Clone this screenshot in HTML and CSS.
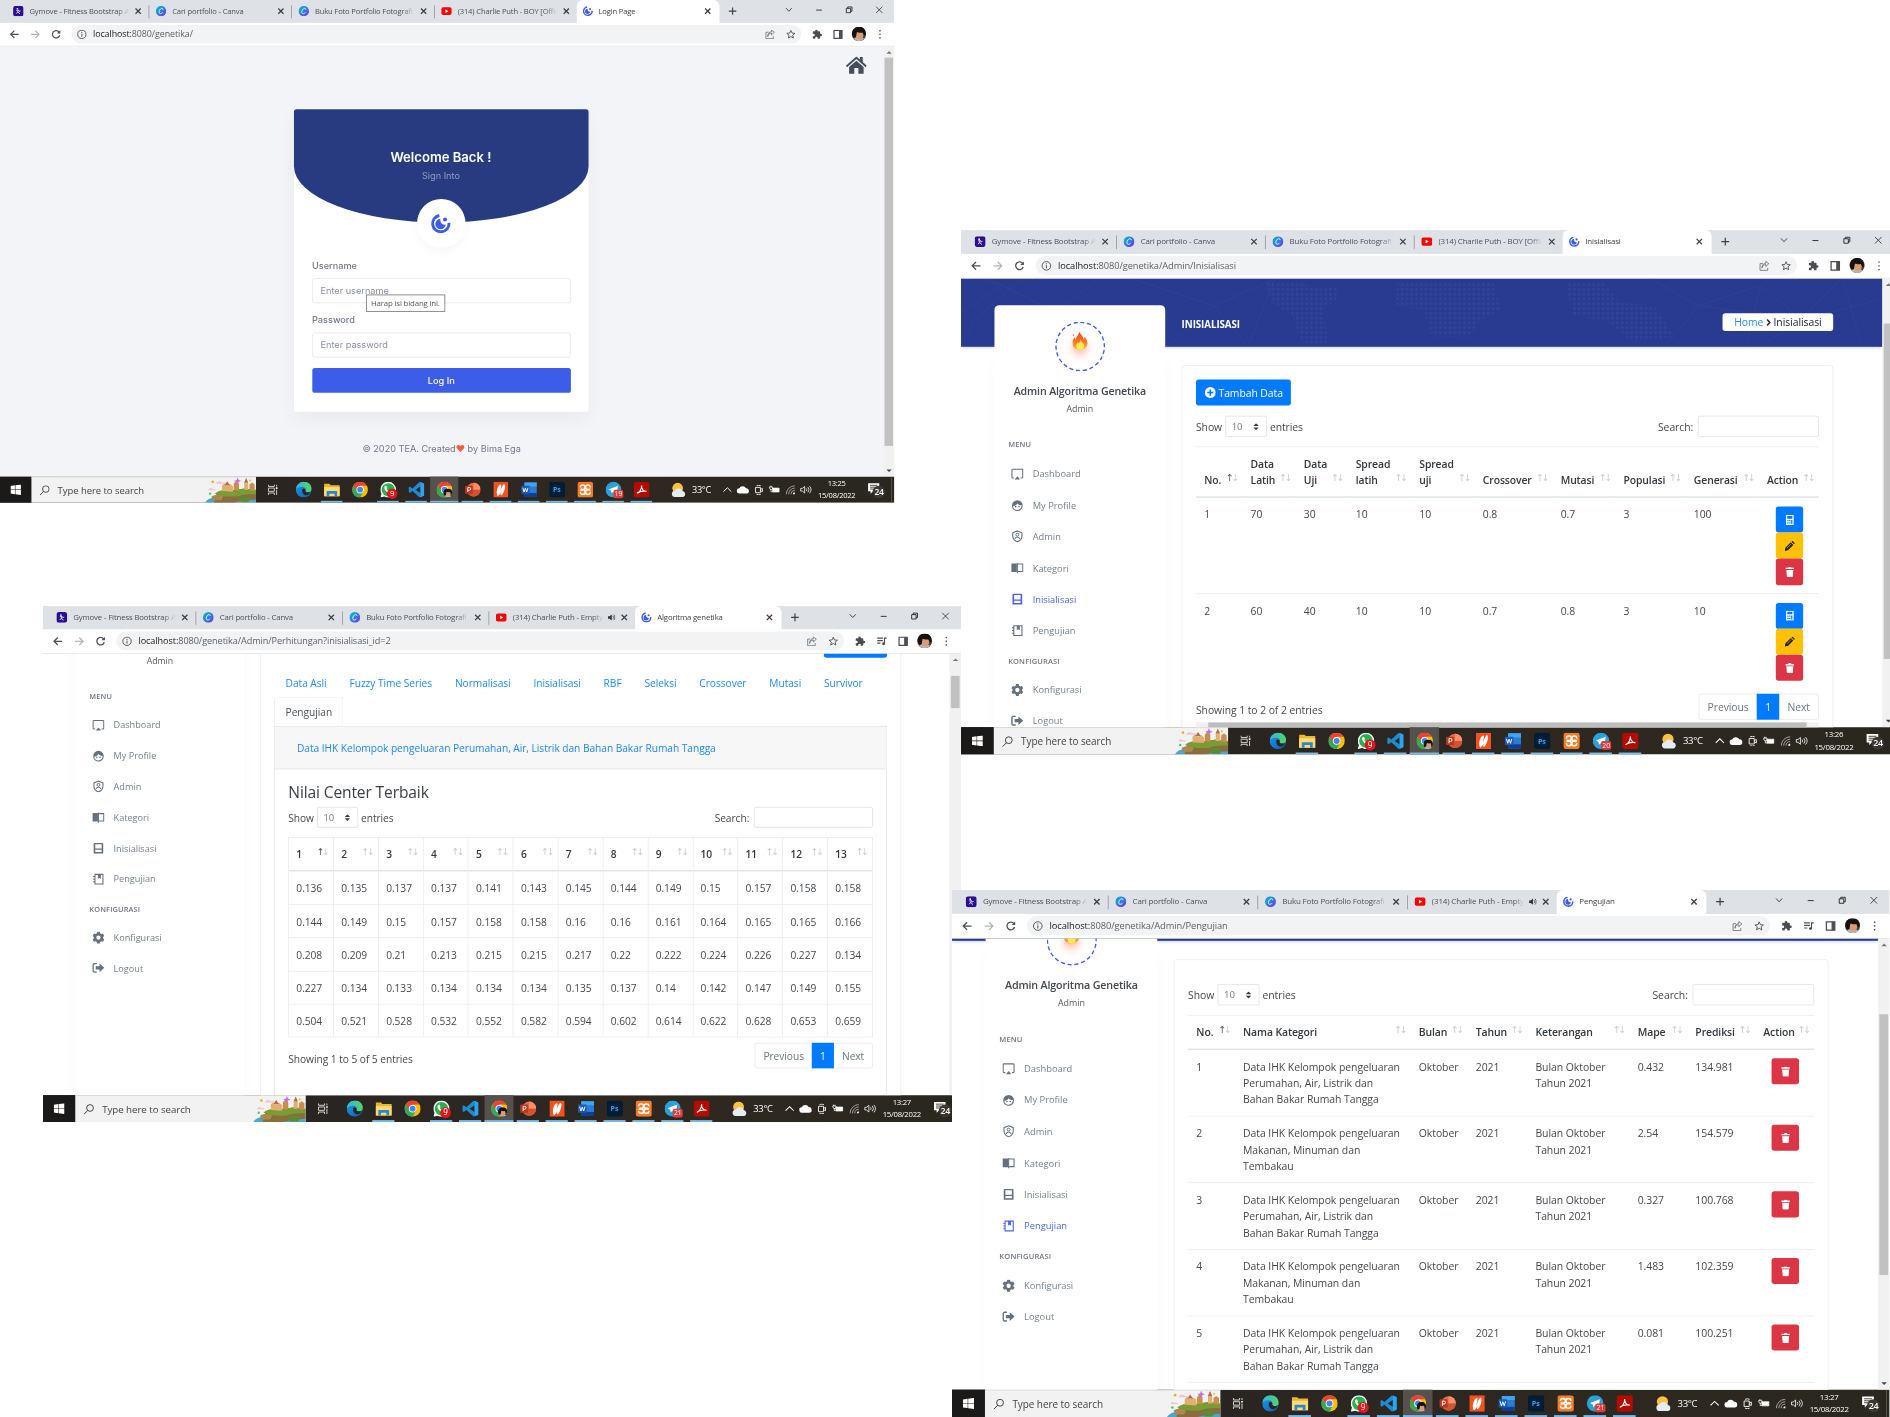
FILE: index.html
```html
<!DOCTYPE html>
<html lang="id">
<head>
<meta charset="utf-8">
<title>Algoritma Genetika</title>
<link rel="stylesheet" href="styles.css">
</head>
<body>
<svg class="defs" aria-hidden="true">
  <defs>
    <linearGradient id="g-canva" x1="0" y1="0" x2="1" y2="1"><stop offset="0" stop-color="#00c4cc"/><stop offset=".5" stop-color="#2f7fe6"/><stop offset="1" stop-color="#7d2ae8"/></linearGradient>
    <linearGradient id="g-edge" x1="0" y1="0" x2="1" y2="1"><stop offset="0" stop-color="#1b9de2"/><stop offset=".55" stop-color="#1479cf"/><stop offset="1" stop-color="#0c59a4"/></linearGradient>
    <linearGradient id="g-edge2" x1="0" y1="0" x2="1" y2="0"><stop offset="0" stop-color="#2fb4e8"/><stop offset="1" stop-color="#5bd35f"/></linearGradient>
    <linearGradient id="g-flame" x1="0" y1="0" x2="0" y2="1"><stop offset="0" stop-color="#f0401f"/><stop offset=".6" stop-color="#fb7a24"/><stop offset="1" stop-color="#fdbf3a"/></linearGradient>
  </defs>
  <symbol id="gymove" viewBox="0 0 16 16"><rect width="16" height="16" rx="4" fill="#2b0d96"/><circle cx="6.600" cy="4.400" r="1.300" fill="#fff"/><path d="M5 7l3.500-.5 1 2 2-1M8 7l-1.200 2.500 2.400 1 .8 2M6.800 9.500L5 11.800" fill="none" stroke="#fff" stroke-width="1.200"/></symbol>
  <symbol id="canva" viewBox="0 0 16 16"><circle cx="8" cy="8" r="8" fill="url(#g-canva)"/><path d="M10.800 5.800c.5-1.500-.6-2.300-1.900-2C6.600 4.400 5 7 5 9.300c0 3.400 3.600 3.200 5.600.6" fill="none" stroke="#fff" stroke-width="1.300"/></symbol>
  <symbol id="youtube" viewBox="0 0 16 16"><rect y="2" width="16" height="12" rx="3" fill="#f00"/><path d="M6.300 5.200v5.600L11 8z" fill="#fff"/></symbol>
  <symbol id="logo" viewBox="0 0 32 32"><path d="M13.500 3.200A13 13 0 1 0 28.800 15" fill="none" stroke="#3b5de7" stroke-width="4.600"/><path d="M15 8.500A8.200 8.200 0 1 0 23.500 17.500C18 18.500 14.500 15 15 8.500z" fill="#3b5de7"/><circle cx="22.500" cy="9.500" r="3.200" fill="#3b5de7"/></symbol>
  <symbol id="x" viewBox="0 0 16 16"><path d="M4 4l8 8M12 4l-8 8" fill="none" stroke="#3c4043" stroke-width="1.900"/></symbol>
  <symbol id="plus" viewBox="0 0 16 16"><path d="M8 1.500v13M1.500 8h13" fill="none" stroke="#3c4043" stroke-width="2"/></symbol>
  <symbol id="w-chev" viewBox="0 0 16 16"><path d="M3 5l5 5.500L13 5" fill="none" stroke="#333" stroke-width="1.500"/></symbol>
  <symbol id="w-min" viewBox="0 0 16 16"><path d="M3 8.500h10" stroke="#222" stroke-width="1.500"/></symbol>
  <symbol id="w-max" viewBox="0 0 16 16"><path d="M3 5.500h7.500V13H3zM5.500 5.500V3H13v7.500h-2.500" fill="none" stroke="#222" stroke-width="1.500"/></symbol>
  <symbol id="w-close" viewBox="0 0 16 16"><path d="M2.500 2.500l11 11M13.500 2.500l-11 11" fill="none" stroke="#222" stroke-width="1.300"/></symbol>
  <symbol id="back" viewBox="0 0 16 16"><path d="M15 8H2M8 2L2 8l6 6" fill="none" stroke="#4a4e52" stroke-width="2"/></symbol>
  <symbol id="fwd" viewBox="0 0 16 16"><path d="M1 8h13M8 2l6 6-6 6" fill="none" stroke="#b2b5b8" stroke-width="2"/></symbol>
  <symbol id="reload" viewBox="0 0 16 16"><path d="M13.500 9.500A6 6 0 1 1 12.500 4.200L13.500 5.500" fill="none" stroke="#4a4e52" stroke-width="2"/><path d="M14.500 1v5.500H9z" fill="#4a4e52"/></symbol>
  <symbol id="info" viewBox="0 0 16 16"><circle cx="8" cy="8" r="6.700" fill="none" stroke="#4a4e52" stroke-width="1.400"/><path d="M8 7v4.800M8 4v1.700" stroke="#4a4e52" stroke-width="1.500"/></symbol>
  <symbol id="share" viewBox="0 0 16 16"><path d="M6 4.500H1.500V15h12v-4M4.500 11.500C5 7.500 7.500 6 10.500 6V9l4.700-4.300L10.500 1v2.800C7 4 4.500 7 4.500 11.500z" fill="none" stroke="#5f6368" stroke-width="1.200"/></symbol>
  <symbol id="star" viewBox="0 0 16 16"><path d="M8 1.500l1.900 4.400 4.700.4-3.600 3.100 1.100 4.600L8 11.500 3.900 14 5 9.400 1.400 6.300l4.700-.4z" fill="none" stroke="#4a4e52" stroke-width="1.400"/></symbol>
  <symbol id="puzzle" viewBox="0 0 16 16"><path d="M14 7h-1V4.500A1.500 1.500 0 0 0 11.500 3H9V2.200a2 2 0 0 0-4 0V3H2.500A1.500 1.500 0 0 0 1 4.500V7h1.200a2 2 0 0 1 0 4H1v2.500A1.500 1.500 0 0 0 2.500 15H5v-1.200a2 2 0 0 1 4 0V15h2.500a1.500 1.500 0 0 0 1.500-1.500V11h1a2 2 0 0 0 0-4z" fill="#4a4e52"/></symbol>
  <symbol id="queue" viewBox="0 0 16 16"><path d="M1 3h9M1 7h9M1 11h5M12.500 12V3H16" fill="none" stroke="#4a4e52" stroke-width="1.800"/><circle cx="11" cy="12" r="2.300" fill="#4a4e52"/></symbol>
  <symbol id="panel" viewBox="0 0 16 16"><path d="M1.500 1.500h13v13h-13z" fill="none" stroke="#4a4e52" stroke-width="2"/><path d="M9.500 1.500h5v13h-5z" fill="#4a4e52"/></symbol>
  <symbol id="face" viewBox="0 0 24 24"><circle cx="12" cy="12" r="12" fill="#4d443f"/><path d="M3 20A12 12 0 0 0 21 20L16 17H8z" fill="#b9b5b0"/><ellipse cx="13" cy="13" rx="6.500" ry="8" fill="#d99c75"/><path d="M.5 13C0 4 6 0 12.500 0 19 0 24 5 23 13l-2.500 2L18 9.500C14 10.500 10.500 9 8.500 9L7 17 3 18z" fill="#17120f"/></symbol>
  <symbol id="dots" viewBox="0 0 16 16"><path d="M7 1h2.200v2.200H7zM7 6.900h2.200v2.200H7zM7 12.800h2.200V15H7z" fill="#4a4e52"/></symbol>
  <symbol id="audio" viewBox="0 0 16 16"><path d="M1 5.500h3L8.500 2v12L4 10.500H1z" fill="#333"/><path d="M10.500 5a4 4 0 0 1 0 6M12.500 2.500a7.500 7.500 0 0 1 0 11" fill="none" stroke="#333" stroke-width="1.500"/></symbol>

  <symbol id="win" viewBox="0 0 16 16"><path d="M0 2.200L6.800 1.200V7.600H0zM7.600 1.100L16 0v7.600H7.600zM0 8.400h6.800v6.400L0 13.800zM7.600 8.400H16V16l-8.400-1.100z" fill="#fff"/></symbol>
  <symbol id="search" viewBox="0 0 16 16"><circle cx="10" cy="6" r="5" fill="none" stroke="#333" stroke-width="1.300"/><path d="M6.500 9.800L1 15.300" stroke="#333" stroke-width="1.400"/></symbol>
  <symbol id="art" viewBox="0 0 78 39"><path d="M0 39Q6 29 22 32L48 30Q70 28 78 32V39z" fill="#4aa6cf"/><path d="M14 39L18 24Q26 18 40 20L62 17 78 20V34L56 36 44 39z" fill="#8b6d3c"/><path d="M15 25Q24 17 38 21L60 17 78 19V26Q60 25 50 29 30 31 15 25z" fill="#7a9d33"/><path d="M26 21V13l4-4 4 4 4-3 5 4v8zM60 19V8l3-6 3 6v11z" fill="#e1b070"/><path d="M44 20V10l4-5 4 5v10zM68 20v-9l4-3 4 3v10z" fill="#c98d4c"/><path d="M30 12l4-6 4 6zM60 8l3-7 3 7z" fill="#b4694a"/><path d="M10 29q10-5 18 0l-3 6H12z" fill="#a98a4e"/><path d="M52 31q10-4 18 1l-4 6H55z" fill="#5f8a34"/><path d="M18 8q4-4 8 0h6v2H17z" fill="#f3c4d4"/><path d="M6 18q3-3 6 0h4v2H5z" fill="#f3c4d4"/><path d="M50 0l1.500 4 4 1.500-4 1.500L50 11l-1.500-4-4-1.500 4-1.500z" fill="#c76be6"/><circle cx="12" cy="7" r="2" fill="#f2b01e"/><circle cx="8" cy="25" r="1.800" fill="#3ccf64"/><circle cx="69" cy="5" r="1.500" fill="#f2c01e"/></symbol>
  <symbol id="task" viewBox="0 0 16 16"><path d="M1 0v3h9V0M1 16v-3h9v3M1 5.500h9v5H1zM13.500 0v3M13.500 8v8" fill="none" stroke="#e8e6e3" stroke-width="1.300"/><path d="M12.300 4.300h2.500v2.500h-2.500z" fill="#fff"/></symbol>
  <symbol id="edge" viewBox="0 0 24 24"><circle cx="12" cy="12" r="12" fill="url(#g-edge)"/><path d="M0 11.500C1 4 6.500 0 12.500 0 19 0 24 5 24 10.500c0 4-3 5.500-6 5.500-2.500 0-4-1-3.500-2.500C16 11 14 7.500 9.500 7.500 5 7.500 1 9 0 11.500z" fill="url(#g-edge2)"/><path d="M9.500 12.500c0-1.200 1-2.500 2.500-2.500 2 0 3 1.500 2.500 3.500-.3 2 4 3.500 8 1.500-2 5-6 6-9 5-2.500-1-4-4-4-7.500z" fill="#2b2520"/></symbol>
  <symbol id="folder" viewBox="0 0 24 24"><path d="M0 3h8l2 2h14v17H0z" fill="#f0b429"/><path d="M0 8h24v14H0z" fill="#fddc73"/><path d="M4 14h16v8h-4v-4H8v4H4z" fill="#2a86d4"/></symbol>
  <symbol id="chrome" viewBox="0 0 24 24"><circle cx="12" cy="12" r="12" fill="#fbbc05"/><path d="M1.600 6A12 12 0 0 1 22.400 6H12L7 14.500z" fill="#ea4335"/><path d="M1.600 6A12 12 0 0 0 12 24l5-9-9-1z" fill="#34a853"/><circle cx="12" cy="12" r="5.600" fill="#fff"/><circle cx="12" cy="12" r="4.400" fill="#4285f4"/></symbol>
  <symbol id="whatsapp" viewBox="0 0 24 24"><path d="M12 0a12 12 0 0 1 0 24c-2 0-4-.5-5.700-1.500L0 24l1.600-6A12 12 0 0 1 12 0z" fill="#fff"/><circle cx="12" cy="12" r="10" fill="#25b24a"/><path d="M7 6.500l2-.5 1.500 3.500-1 1.500q1.500 2.500 4 3.500l1.500-1.500 3 1.500c0 3-3 3.500-5 2.500-4-1.500-7-5-7-8 0-1 .5-2 1-2.500z" fill="#fff"/></symbol>
  <symbol id="vscode" viewBox="0 0 24 24"><path d="M17 0l7 3v18l-7 3L6 14l-4 3-2-1.500V8.500L2 7l4 3zM18 7l-7 5 7 5z" fill="#1f8ad2" fill-rule="evenodd"/><path d="M18.500 .6L24 3v18l-5.500 2.400z" fill="#2fa3ee"/></symbol>
  <symbol id="ppt" viewBox="0 0 24 24"><circle cx="13.500" cy="12" r="10.500" fill="#ed6c47"/><path d="M13.500 1.500A10.500 10.500 0 0 1 24 12H13.500z" fill="#ff8f6b"/><path d="M3 12h21a10.500 10.500 0 0 1-21 0z" fill="#d35230"/><rect y="6" width="12" height="12" rx="1" fill="#b7371e"/><path d="M4.500 15.500v-7h2.300a2 2 0 0 1 0 4.300H4.500" fill="none" stroke="#fff" stroke-width="1.400"/></symbol>
  <symbol id="nitro" viewBox="0 0 24 24"><path d="M1 0h22v24H1z" fill="#f4511e"/><path d="M7 22c-2-5-1.500-10 .5-14 1-2 2.500-3.500 4-4 1.500 0 1.500 1.500 1 3.500l-2 9c1.500-5 3-9 5.500-12.500 1.500-1 2.500 0 2.500 2 0 5-1.500 9-4 13-1.500 2-3 2-3 0l.5-3c-1.500 3-2.500 5-5 6z" fill="#fff"/></symbol>
  <symbol id="word" viewBox="0 0 24 24"><rect x="5" y="1" width="19" height="22" rx="1.500" fill="#2b7cd3"/><path d="M5 1h19v6H5z" fill="#41a5ee"/><path d="M5 17h19v6H5z" fill="#103f91"/><rect y="6" width="13" height="12" rx="1" fill="#185abd"/><path d="M2.500 9l2 6.500 2-6 2 6 2-6.500" fill="none" stroke="#fff" stroke-width="1.400"/></symbol>
  <symbol id="ps" viewBox="0 0 24 24"><rect width="24" height="24" rx="4" fill="#001d34"/></symbol>
  <symbol id="xampp" viewBox="0 0 24 24"><rect width="24" height="24" rx="4" fill="#fb7a24"/><rect x="4.500" y="5" width="7" height="6.500" rx="2.800" fill="none" stroke="#fff" stroke-width="2.200"/><rect x="12.500" y="5" width="7" height="6.500" rx="2.800" fill="none" stroke="#fff" stroke-width="2.200"/><rect x="4.500" y="12.500" width="7" height="6.500" rx="2.800" fill="none" stroke="#fff" stroke-width="2.200"/><rect x="12.500" y="12.500" width="7" height="6.500" rx="2.800" fill="none" stroke="#fff" stroke-width="2.200"/><path d="M3 8.500h3v2H3zM3 13.500h3v2H3zM18 8.500h3v2h-3zM18 13.500h3v2h-3z" fill="#fb7a24"/></symbol>
  <symbol id="telegram" viewBox="0 0 24 24"><circle cx="12" cy="12" r="12" fill="#2ba1dc"/><path d="M4.500 11.500L19 6l-2.500 13-5-3.500-2.500 2-.5-4z" fill="#fff"/></symbol>
  <symbol id="acrobat" viewBox="0 0 24 24"><rect width="24" height="24" rx="4" fill="#b30b00"/><path d="M5 17.500Q12 14 12 5.500 12 14 19.500 14.500 11 13 5 17.500z" fill="none" stroke="#fff" stroke-width="1.600"/></symbol>
  <symbol id="weather" viewBox="0 0 26 24"><circle cx="11" cy="9" r="8.500" fill="#fdc23e"/><path d="M7 23a5 5 0 0 1-.5-10 7 7 0 0 1 12.500.5A5 5 0 0 1 20 23z" fill="#e4ecf5"/></symbol>
  <symbol id="t-up" viewBox="0 0 16 16"><path d="M2 11l6-6 6 6" fill="none" stroke="#fff" stroke-width="1.500"/></symbol>
  <symbol id="t-cloud" viewBox="0 0 16 16"><path d="M3.500 13a3.500 3.500 0 0 1-.5-7A5 5 0 0 1 12 5.800 3.600 3.600 0 0 1 12.500 13z" fill="#fff" transform="translate(-1.300 -1) scale(1.150)"/></symbol>
  <symbol id="t-meet" viewBox="0 0 16 16"><path d="M3 4.500h7.500v8H3zM10.500 7.500l3-1.500v5l-3-1.500M4.500 2a8 8 0 0 1 6.500 0M4.500 15a8 8 0 0 0 6.500 0" fill="none" stroke="#fff" stroke-width="1.300"/></symbol>
  <symbol id="t-bat" viewBox="0 0 16 16"><path d="M5 5.500h10v6H5z" fill="#fff" stroke="#fff"/><path d="M0 4h5v3q-2 2-4 0zM2.500 7v4H5M1.500 2v2M3.500 2v2" fill="none" stroke="#fff" stroke-width="1.100"/></symbol>
  <symbol id="t-wifi" viewBox="0 0 16 16"><path d="M2 15A13 13 0 0 1 15 2M5.500 15A9.500 9.500 0 0 1 15 5.500M9 15a6 6 0 0 1 6-6" fill="none" stroke="#bdbab5" stroke-width="1.200"/><path d="M12 15a3 3 0 0 1 3-3v3z" fill="#fff"/></symbol>
  <symbol id="t-vol" viewBox="0 0 16 16"><path d="M0 6h2.500L6 3v10L2.500 10H0zM8.500 6a3 3 0 0 1 0 4M11 4a6 6 0 0 1 0 8M13.500 2.500a8.500 8.500 0 0 1 0 11" fill="none" stroke="#fff" stroke-width="1.200"/></symbol>
  <symbol id="t-note" viewBox="0 0 20 20"><path d="M1 1h18v13H9l-4 4v-4H1z" fill="#fff"/><path d="M4 4.500h12M4 7.500h12M4 10.500h7" stroke="#2b2520" stroke-width="1.300"/></symbol>

  <symbol id="house" viewBox="0 0 36 30"><path d="M0 16L18 0l6 5.300V1h5v8.800L36 16l-2 2.500L18 4.500 2 18.500z" fill="#454d5c"/><path d="M18 7.500L30.500 18.300V30H21.500V20h-7v10H5.500V18.300z" fill="#454d5c"/></symbol>
  <symbol id="flame" viewBox="0 0 24 28"><path d="M11 0c1 5 6 7 6.500 12 1-1 1.300-2.500 1-4 3 3 4.500 6.500 4.500 10 0 6-5 10-11.500 10S0 24 0 18c0-4 2-7 4-9 0 2 .5 3 1.500 4C5.500 8 10 5 11 0z" fill="url(#g-flame)"/><path d="M12 12c1 4 6 5 6 10 0 4-3 6-6 6s-6-2-6-6c0-3 2-4 2.500-6 .7 1 1 2 1 3 2-2 2.500-4 2.500-7z" fill="#ffe84f"/><path d="M2 3l1 3-2 1z" fill="#fb5a24"/></symbol>
  <symbol id="m-dash" viewBox="0 0 24 24"><path d="M6 19H3.500A1.500 1.500 0 0 1 2 17.500v-13A1.500 1.500 0 0 1 3.500 3h17A1.500 1.500 0 0 1 22 4.500v13a1.500 1.500 0 0 1-1.500 1.500H18" fill="none" stroke="currentColor" stroke-width="2"/><path d="M7 22l5-6 5 6z" fill="currentColor"/></symbol>
  <symbol id="m-face" viewBox="0 0 24 24"><path d="M12 2a10 10 0 1 0 0 20 10 10 0 0 0 0-20zm0 18a8 8 0 0 1-8-7C8 12.500 10.500 10.500 12 8c2 2.500 4.500 3.500 7.900 3.500A8 8 0 0 1 12 20z" fill="currentColor"/><circle cx="9" cy="14" r="1.500" fill="currentColor"/><circle cx="15" cy="14" r="1.500" fill="currentColor"/></symbol>
  <symbol id="m-shield" viewBox="0 0 24 24"><path d="M12 2l8.500 3.500V11c0 5.500-3.500 9.500-8.500 11-5-1.500-8.500-5.500-8.500-11V5.500z" fill="none" stroke="currentColor" stroke-width="2"/><circle cx="12" cy="9" r="2.700" fill="none" stroke="currentColor" stroke-width="1.800"/><path d="M7.500 17q0-3.500 4.500-3.500t4.500 3.500" fill="none" stroke="currentColor" stroke-width="1.800"/></symbol>
  <symbol id="m-book" viewBox="0 0 24 24"><path d="M1 4h10v16H1z" fill="currentColor"/><path d="M13 5h9v14h-9" fill="none" stroke="currentColor" stroke-width="2"/><path d="M11 3h2v19h-2z" fill="currentColor"/></symbol>
  <symbol id="m-init" viewBox="0 0 24 24"><path d="M5 2h14a2 2 0 0 1 2 2v18H3V4a2 2 0 0 1 2-2zm1 2.500v8h12v-8zm0 10.500V19h12v-4z" fill="currentColor" fill-rule="evenodd"/></symbol>
  <symbol id="m-note" viewBox="0 0 24 24"><path d="M5.500 3h15v18h-15zM2 7h4M2 12h4M2 17h4" fill="none" stroke="currentColor" stroke-width="2"/><path d="M11 3h5.500v8.500L13.700 9.500 11 11.500z" fill="currentColor"/></symbol>
  <symbol id="m-gear" viewBox="0 0 24 24"><path d="M9.500 1h5l.6 3 2.400 1.400 2.900-1 2.500 4.300L20.600 11v2l2.300 2.300-2.500 4.300-2.900-1-2.400 1.400-.6 3h-5l-.6-3-2.400-1.400-2.900 1-2.500-4.300L3.400 13v-2L1.100 8.700l2.500-4.300 2.900 1L8.900 4zM12 8a4 4 0 1 0 0 8 4 4 0 0 0 0-8z" fill="currentColor" fill-rule="evenodd"/></symbol>
  <symbol id="m-out" viewBox="0 0 24 24"><path d="M9 4H4.500A2.500 2.500 0 0 0 2 6.500v11A2.500 2.500 0 0 0 4.500 20H9" fill="none" stroke="currentColor" stroke-width="2.600"/><path d="M14 4l9 8-9 8v-5H7V9h7z" fill="currentColor"/></symbol>
  <symbol id="b-plus" viewBox="0 0 16 16"><path d="M8 0a8 8 0 1 0 0 16A8 8 0 0 0 8 0zM6.800 3.500h2.400v3.300h3.300v2.400H9.200v3.300H6.800V9.200H3.500V6.800h3.300z" fill="#fff" fill-rule="evenodd"/></symbol>
  <symbol id="b-calc" viewBox="0 0 16 16"><path d="M2 0h12v16H2zm2 2v4h8V2zm0 6v2h2V8zm3 0v2h2V8zm3 0v6h2V8zM4 11.500v2h2v-2zm3 0v2h2v-2z" fill="#fff" fill-rule="evenodd"/></symbol>
  <symbol id="b-pen" viewBox="0 0 16 16"><path d="M0 16l1-5L9.500 2.500l4 4L5 15zM10.500 1.500L12 0l4 4-1.500 1.500z" fill="#212529"/><path d="M3.500 11.500L10 5" stroke="#ffc107" stroke-width="1"/></symbol>
  <symbol id="b-trash" viewBox="0 0 16 16"><path d="M1.500 1.500h4l1-1.500h3l1 1.500h4v2.200h-13zM2.500 5h11l-1 11h-9z" fill="#fff"/></symbol>
  <symbol id="select" viewBox="0 0 8 10"><path d="M0 4l4-4 4 4zM0 6h8l-4 4z" fill="#343a40"/></symbol>
</svg>

<section class="win win-calc">
  <div class="tabs">
    <div class="tab"><svg><use href="#gymove"/></svg><span>Gymove - Fitness Bootstrap Admin</span><svg><use href="#x"/></svg></div>
    <div class="tab"><svg><use href="#canva"/></svg><span>Cari portfolio - Canva</span><svg><use href="#x"/></svg></div>
    <div class="tab"><svg><use href="#canva"/></svg><span>Buku Foto Portfolio Fotografi</span><svg><use href="#x"/></svg></div>
    <div class="tab"><svg><use href="#youtube"/></svg><span>(314) Charlie Puth - Empty</span><svg class="audio"><use href="#audio"/></svg><svg><use href="#x"/></svg></div>
    <div class="tab on"><svg><use href="#logo"/></svg><span>Algoritma genetika</span><svg><use href="#x"/></svg></div>
    <svg class="new"><use href="#plus"/></svg>
    <div class="ctl"><svg><use href="#w-chev"/></svg><svg><use href="#w-min"/></svg><svg><use href="#w-max"/></svg><svg><use href="#w-close"/></svg></div>
  </div>
  <div class="bar">
    <svg><use href="#back"/></svg><svg><use href="#fwd"/></svg><svg><use href="#reload"/></svg>
    <div class="url"><svg><use href="#info"/></svg><p><b>localhost:</b>8080/genetika/Admin/Perhitungan?inisialisasi_id=2</p><svg><use href="#share"/></svg><svg><use href="#star"/></svg></div>
    <svg><use href="#puzzle"/></svg><svg><use href="#queue"/></svg><svg><use href="#panel"/></svg><svg class="me"><use href="#face"/></svg><svg><use href="#dots"/></svg>
  </div>
  <div class="view">
    <div class="doc">
      <div class="banner"></div>
      <div class="layout">
        <aside class="side">
          <div class="ring"><svg><use href="#flame"/></svg></div>
          <h4>Admin Algoritma Genetika</h4><p class="role">Admin</p>
          <h6>MENU</h6>
          <a><svg><use href="#m-dash"/></svg>Dashboard</a>
          <a><svg><use href="#m-face"/></svg>My Profile</a>
          <a><svg><use href="#m-shield"/></svg>Admin</a>
          <a><svg><use href="#m-book"/></svg>Kategori</a>
          <a><svg><use href="#m-init"/></svg>Inisialisasi</a>
          <a><svg><use href="#m-note"/></svg>Pengujian</a>
          <h6 class="second">KONFIGURASI</h6>
          <a><svg><use href="#m-gear"/></svg>Konfigurasi</a>
          <a><svg><use href="#m-out"/></svg>Logout</a>
        </aside>
        <main class="main">
          <div class="head"></div>
          <div class="card">
            <div class="btn-add right"></div>
            <nav class="pills"><a>Data Asli</a><a>Fuzzy Time Series</a><a>Normalisasi</a><a>Inisialisasi</a><a>RBF</a><a>Seleksi</a><a>Crossover</a><a>Mutasi</a><a>Survivor</a><a class="on">Pengujian</a></nav>
            <div class="panel">
              <div class="panel-head">Data IHK Kelompok pengeluaran Perumahan, Air, Listrik dan Bahan Bakar Rumah Tangga</div>
              <div class="panel-body">
                <h3>Nilai Center Terbaik</h3>
                <div class="tools"><span>Show</span><span class="select">10<svg><use href="#select"/></svg></span><span>entries</span><span class="push">Search:</span><i class="field"></i></div>
                <table class="grid">
                  <tr><th class="asc">1</th><th>2</th><th>3</th><th>4</th><th>5</th><th>6</th><th>7</th><th>8</th><th>9</th><th>10</th><th>11</th><th>12</th><th>13</th></tr>
                  <tr><td>0.136</td><td>0.135</td><td>0.137</td><td>0.137</td><td>0.141</td><td>0.143</td><td>0.145</td><td>0.144</td><td>0.149</td><td>0.15</td><td>0.157</td><td>0.158</td><td>0.158</td></tr>
                  <tr><td>0.144</td><td>0.149</td><td>0.15</td><td>0.157</td><td>0.158</td><td>0.158</td><td>0.16</td><td>0.16</td><td>0.161</td><td>0.164</td><td>0.165</td><td>0.165</td><td>0.166</td></tr>
                  <tr><td>0.208</td><td>0.209</td><td>0.21</td><td>0.213</td><td>0.215</td><td>0.215</td><td>0.217</td><td>0.22</td><td>0.222</td><td>0.224</td><td>0.226</td><td>0.227</td><td>0.134</td></tr>
                  <tr><td>0.227</td><td>0.134</td><td>0.133</td><td>0.134</td><td>0.134</td><td>0.134</td><td>0.135</td><td>0.137</td><td>0.14</td><td>0.142</td><td>0.147</td><td>0.149</td><td>0.155</td></tr>
                  <tr><td>0.504</td><td>0.521</td><td>0.528</td><td>0.532</td><td>0.552</td><td>0.582</td><td>0.594</td><td>0.602</td><td>0.614</td><td>0.622</td><td>0.628</td><td>0.653</td><td>0.659</td></tr>
                </table>
                <div class="foot"><span>Showing 1 to 5 of 5 entries</span><div class="pager"><span>Previous</span><span class="on">1</span><span>Next</span></div></div>
              </div>
            </div>
          </div>
        </main>
      </div>
    </div>
    <div class="scroll"><i></i></div>
  </div>
  <div class="taskbar">
    <div class="start"><svg><use href="#win"/></svg></div>
    <div class="find"><svg><use href="#search"/></svg><span>Type here to search</span><svg class="art"><use href="#art"/></svg></div>
    <div class="tv"><svg><use href="#task"/></svg></div>
    <div class="app"><svg><use href="#edge"/></svg></div><div class="app run"><svg><use href="#folder"/></svg></div><div class="app"><svg><use href="#chrome"/></svg></div><div class="app run"><svg><use href="#whatsapp"/></svg><em class="round">9</em></div><div class="app run"><svg><use href="#vscode"/></svg></div><div class="app run now"><svg><use href="#chrome"/></svg><svg class="mini"><use href="#face"/></svg></div><div class="app run"><svg><use href="#ppt"/></svg></div><div class="app run"><svg><use href="#nitro"/></svg></div><div class="app run"><svg><use href="#word"/></svg></div><div class="app run"><svg><use href="#ps"/></svg><strong>Ps</strong></div><div class="app run"><svg><use href="#xampp"/></svg></div><div class="app run"><svg><use href="#telegram"/></svg><em>21</em></div><div class="app run"><svg><use href="#acrobat"/></svg></div>
    <div class="tray"><svg class="wx"><use href="#weather"/></svg><span class="temp">33°C</span><svg><use href="#t-up"/></svg><svg><use href="#t-cloud"/></svg><svg><use href="#t-meet"/></svg><svg><use href="#t-bat"/></svg><svg><use href="#t-wifi"/></svg><svg><use href="#t-vol"/></svg><span class="clock">13:27<br>15/08/2022</span><span class="note"><svg><use href="#t-note"/></svg><em>24</em></span></div>
  </div>
</section>

<section class="win win-login">
  <div class="tabs">
    <div class="tab"><svg><use href="#gymove"/></svg><span>Gymove - Fitness Bootstrap Admin</span><svg><use href="#x"/></svg></div>
    <div class="tab"><svg><use href="#canva"/></svg><span>Cari portfolio - Canva</span><svg><use href="#x"/></svg></div>
    <div class="tab"><svg><use href="#canva"/></svg><span>Buku Foto Portfolio Fotografi</span><svg><use href="#x"/></svg></div>
    <div class="tab"><svg><use href="#youtube"/></svg><span>(314) Charlie Puth - BOY [Official</span><svg><use href="#x"/></svg></div>
    <div class="tab on"><svg><use href="#logo"/></svg><span>Login Page</span><svg><use href="#x"/></svg></div>
    <svg class="new"><use href="#plus"/></svg>
    <div class="ctl"><svg><use href="#w-chev"/></svg><svg><use href="#w-min"/></svg><svg><use href="#w-max"/></svg><svg><use href="#w-close"/></svg></div>
  </div>
  <div class="bar">
    <svg><use href="#back"/></svg><svg><use href="#fwd"/></svg><svg><use href="#reload"/></svg>
    <div class="url"><svg><use href="#info"/></svg><p><b>localhost:</b>8080/genetika/</p><svg><use href="#share"/></svg><svg><use href="#star"/></svg></div>
    <svg><use href="#puzzle"/></svg><svg><use href="#panel"/></svg><svg class="me"><use href="#face"/></svg><svg><use href="#dots"/></svg>
  </div>
  <div class="view">
    <div class="login">
      <svg class="house"><use href="#house"/></svg>
      <div class="login-card">
        <div class="hero"><h5>Welcome Back !</h5><p>Sign Into</p><div class="badge"><svg><use href="#logo"/></svg></div></div>
        <div class="form">
          <label>Username</label>
          <div class="input">Enter username<span class="tip">Harap isi bidang ini.</span></div>
          <label>Password</label>
          <div class="input">Enter password</div>
          <div class="submit">Log In</div>
        </div>
      </div>
      <p class="copy">© 2020 TEA. Created<span>♥</span> by Bima Ega</p>
    </div>
    <div class="scroll"><i></i></div>
  </div>
  <div class="taskbar">
    <div class="start"><svg><use href="#win"/></svg></div>
    <div class="find"><svg><use href="#search"/></svg><span>Type here to search</span><svg class="art"><use href="#art"/></svg></div>
    <div class="tv"><svg><use href="#task"/></svg></div>
    <div class="app"><svg><use href="#edge"/></svg></div><div class="app run"><svg><use href="#folder"/></svg></div><div class="app"><svg><use href="#chrome"/></svg></div><div class="app run"><svg><use href="#whatsapp"/></svg><em class="round">9</em></div><div class="app run"><svg><use href="#vscode"/></svg></div><div class="app run now"><svg><use href="#chrome"/></svg><svg class="mini"><use href="#face"/></svg></div><div class="app run"><svg><use href="#ppt"/></svg></div><div class="app run"><svg><use href="#nitro"/></svg></div><div class="app run"><svg><use href="#word"/></svg></div><div class="app run"><svg><use href="#ps"/></svg><strong>Ps</strong></div><div class="app run"><svg><use href="#xampp"/></svg></div><div class="app run"><svg><use href="#telegram"/></svg><em>19</em></div><div class="app run"><svg><use href="#acrobat"/></svg></div>
    <div class="tray"><svg class="wx"><use href="#weather"/></svg><span class="temp">33°C</span><svg><use href="#t-up"/></svg><svg><use href="#t-cloud"/></svg><svg><use href="#t-meet"/></svg><svg><use href="#t-bat"/></svg><svg><use href="#t-wifi"/></svg><svg><use href="#t-vol"/></svg><span class="clock">13:25<br>15/08/2022</span><span class="note"><svg><use href="#t-note"/></svg><em>24</em></span></div>
  </div>
</section>

<section class="win win-init">
  <div class="tabs">
    <div class="tab"><svg><use href="#gymove"/></svg><span>Gymove - Fitness Bootstrap Admin</span><svg><use href="#x"/></svg></div>
    <div class="tab"><svg><use href="#canva"/></svg><span>Cari portfolio - Canva</span><svg><use href="#x"/></svg></div>
    <div class="tab"><svg><use href="#canva"/></svg><span>Buku Foto Portfolio Fotografi</span><svg><use href="#x"/></svg></div>
    <div class="tab"><svg><use href="#youtube"/></svg><span>(314) Charlie Puth - BOY [Official</span><svg><use href="#x"/></svg></div>
    <div class="tab on"><svg><use href="#logo"/></svg><span>Inisialisasi</span><svg><use href="#x"/></svg></div>
    <svg class="new"><use href="#plus"/></svg>
    <div class="ctl"><svg><use href="#w-chev"/></svg><svg><use href="#w-min"/></svg><svg><use href="#w-max"/></svg><svg><use href="#w-close"/></svg></div>
  </div>
  <div class="bar">
    <svg><use href="#back"/></svg><svg><use href="#fwd"/></svg><svg><use href="#reload"/></svg>
    <div class="url"><svg><use href="#info"/></svg><p><b>localhost:</b>8080/genetika/Admin/Inisialisasi</p><svg><use href="#share"/></svg><svg><use href="#star"/></svg></div>
    <svg><use href="#puzzle"/></svg><svg><use href="#panel"/></svg><svg class="me"><use href="#face"/></svg><svg><use href="#dots"/></svg>
  </div>
  <div class="view">
    <div class="doc">
      <div class="banner">
        <svg class="mesh" viewBox="0 0 1349 100" preserveAspectRatio="none">
          <defs><pattern id="dot" width="7" height="7" patternUnits="userSpaceOnUse"><rect width="4" height="4" fill="#fff" opacity=".04"/></pattern></defs>
          <g fill="url(#dot)"><path d="M445 5h50l30 10 25-5v20l-20 15 10 50h-40l-15-40-30-20z"/><path d="M640 5h140l10 40-30 15-15 25h-55l-15-40-40-5z"/><path d="M885 5h55l25 30 50 5 30 45-60 8-40-30-50-10z"/></g>
          <path d="M0 50l60-40 80 40 60-50M20 60L90 0M20 60l-20 40M60 10L30 0M300 100l70-60 50 60 40-100M370 40l90-40M250 0l120 40M1010 0l70 40 90-30 60 50 60-60M1080 40l-50 60M1170 10l-20 90M1230 60l-60 40M1230 60l119-30M1290 0l30 100M1080 40l150 20" fill="none" stroke="#fff" stroke-opacity=".05"/>
        </svg>
      </div>
      <div class="layout">
        <aside class="side">
          <div class="ring"><svg><use href="#flame"/></svg></div>
          <h4>Admin Algoritma Genetika</h4><p class="role">Admin</p>
          <h6>MENU</h6>
          <a><svg><use href="#m-dash"/></svg>Dashboard</a>
          <a><svg><use href="#m-face"/></svg>My Profile</a>
          <a><svg><use href="#m-shield"/></svg>Admin</a>
          <a><svg><use href="#m-book"/></svg>Kategori</a>
          <a class="on"><svg><use href="#m-init"/></svg>Inisialisasi</a>
          <a><svg><use href="#m-note"/></svg>Pengujian</a>
          <h6 class="second">KONFIGURASI</h6>
          <a><svg><use href="#m-gear"/></svg>Konfigurasi</a>
          <a><svg><use href="#m-out"/></svg>Logout</a>
        </aside>
        <main class="main">
          <div class="head"><h2>INISIALISASI</h2><div class="crumb"><a>Home</a><svg viewBox="0 0 8 12"><path d="M1.500 1L6 6l-4.500 5" fill="none" stroke="#212529" stroke-width="2.500"/></svg>Inisialisasi</div></div>
          <div class="card">
            <div class="btn-add"><svg><use href="#b-plus"/></svg>Tambah Data</div>
            <div class="tools"><span>Show</span><span class="select">10<svg><use href="#select"/></svg></span><span>entries</span><span class="push">Search:</span><i class="field"></i></div>
            <table class="init">
              <tr><th class="asc">No.</th><th>Data Latih</th><th>Data Uji</th><th>Spread latih</th><th>Spread uji</th><th>Crossover</th><th>Mutasi</th><th>Populasi</th><th>Generasi</th><th>Action</th></tr>
              <tr><td>1</td><td>70</td><td>30</td><td>10</td><td>10</td><td>0.8</td><td>0.7</td><td>3</td><td>100</td><td><div class="acts"><span class="blue"><svg><use href="#b-calc"/></svg></span><span class="amber"><svg><use href="#b-pen"/></svg></span><span class="red"><svg><use href="#b-trash"/></svg></span></div></td></tr>
              <tr><td>2</td><td>60</td><td>40</td><td>10</td><td>10</td><td>0.7</td><td>0.8</td><td>3</td><td>10</td><td><div class="acts"><span class="blue"><svg><use href="#b-calc"/></svg></span><span class="amber"><svg><use href="#b-pen"/></svg></span><span class="red"><svg><use href="#b-trash"/></svg></span></div></td></tr>
            </table>
            <div class="foot"><span>Showing 1 to 2 of 2 entries</span><div class="pager"><span>Previous</span><span class="on">1</span><span>Next</span></div></div>
            <div class="hscroll"><i></i></div>
          </div>
        </main>
      </div>
    </div>
    <div class="scroll"><i></i></div>
  </div>
  <div class="taskbar">
    <div class="start"><svg><use href="#win"/></svg></div>
    <div class="find"><svg><use href="#search"/></svg><span>Type here to search</span><svg class="art"><use href="#art"/></svg></div>
    <div class="tv"><svg><use href="#task"/></svg></div>
    <div class="app"><svg><use href="#edge"/></svg></div><div class="app run"><svg><use href="#folder"/></svg></div><div class="app"><svg><use href="#chrome"/></svg></div><div class="app run"><svg><use href="#whatsapp"/></svg><em class="round">9</em></div><div class="app run"><svg><use href="#vscode"/></svg></div><div class="app run now"><svg><use href="#chrome"/></svg><svg class="mini"><use href="#face"/></svg></div><div class="app run"><svg><use href="#ppt"/></svg></div><div class="app run"><svg><use href="#nitro"/></svg></div><div class="app run"><svg><use href="#word"/></svg></div><div class="app run"><svg><use href="#ps"/></svg><strong>Ps</strong></div><div class="app run"><svg><use href="#xampp"/></svg></div><div class="app run"><svg><use href="#telegram"/></svg><em>20</em></div><div class="app run"><svg><use href="#acrobat"/></svg></div>
    <div class="tray"><svg class="wx"><use href="#weather"/></svg><span class="temp">33°C</span><svg><use href="#t-up"/></svg><svg><use href="#t-cloud"/></svg><svg><use href="#t-meet"/></svg><svg><use href="#t-bat"/></svg><svg><use href="#t-wifi"/></svg><svg><use href="#t-vol"/></svg><span class="clock">13:26<br>15/08/2022</span><span class="note"><svg><use href="#t-note"/></svg><em>24</em></span></div>
  </div>
</section>

<section class="win win-test">
  <div class="tabs">
    <div class="tab"><svg><use href="#gymove"/></svg><span>Gymove - Fitness Bootstrap Admin</span><svg><use href="#x"/></svg></div>
    <div class="tab"><svg><use href="#canva"/></svg><span>Cari portfolio - Canva</span><svg><use href="#x"/></svg></div>
    <div class="tab"><svg><use href="#canva"/></svg><span>Buku Foto Portfolio Fotografi</span><svg><use href="#x"/></svg></div>
    <div class="tab"><svg><use href="#youtube"/></svg><span>(314) Charlie Puth - Empty</span><svg class="audio"><use href="#audio"/></svg><svg><use href="#x"/></svg></div>
    <div class="tab on"><svg><use href="#logo"/></svg><span>Pengujian</span><svg><use href="#x"/></svg></div>
    <svg class="new"><use href="#plus"/></svg>
    <div class="ctl"><svg><use href="#w-chev"/></svg><svg><use href="#w-min"/></svg><svg><use href="#w-max"/></svg><svg><use href="#w-close"/></svg></div>
  </div>
  <div class="bar">
    <svg><use href="#back"/></svg><svg><use href="#fwd"/></svg><svg><use href="#reload"/></svg>
    <div class="url"><svg><use href="#info"/></svg><p><b>localhost:</b>8080/genetika/Admin/Pengujian</p><svg><use href="#share"/></svg><svg><use href="#star"/></svg></div>
    <svg><use href="#puzzle"/></svg><svg><use href="#queue"/></svg><svg><use href="#panel"/></svg><svg class="me"><use href="#face"/></svg><svg><use href="#dots"/></svg>
  </div>
  <div class="view">
    <div class="doc">
      <div class="banner"></div>
      <div class="layout">
        <aside class="side">
          <div class="ring"><svg><use href="#flame"/></svg></div>
          <h4>Admin Algoritma Genetika</h4><p class="role">Admin</p>
          <h6>MENU</h6>
          <a><svg><use href="#m-dash"/></svg>Dashboard</a>
          <a><svg><use href="#m-face"/></svg>My Profile</a>
          <a><svg><use href="#m-shield"/></svg>Admin</a>
          <a><svg><use href="#m-book"/></svg>Kategori</a>
          <a><svg><use href="#m-init"/></svg>Inisialisasi</a>
          <a class="on"><svg><use href="#m-note"/></svg>Pengujian</a>
          <h6 class="second">KONFIGURASI</h6>
          <a><svg><use href="#m-gear"/></svg>Konfigurasi</a>
          <a><svg><use href="#m-out"/></svg>Logout</a>
        </aside>
        <main class="main">
          <div class="head"></div>
          <div class="card">
            <div class="tools"><span>Show</span><span class="select">10<svg><use href="#select"/></svg></span><span>entries</span><span class="push">Search:</span><i class="field"></i></div>
            <table class="test">
              <tr><th class="asc">No.</th><th>Nama Kategori</th><th>Bulan</th><th>Tahun</th><th>Keterangan</th><th>Mape</th><th>Prediksi</th><th>Action</th></tr>
              <tr><td>1</td><td>Data IHK Kelompok pengeluaran<br>Perumahan, Air, Listrik dan<br>Bahan Bakar Rumah Tangga</td><td>Oktober</td><td>2021</td><td>Bulan Oktober<br>Tahun 2021</td><td>0.432</td><td>134.981</td><td><div class="acts"><span class="red"><svg><use href="#b-trash"/></svg></span></div></td></tr>
              <tr><td>2</td><td>Data IHK Kelompok pengeluaran<br>Makanan, Minuman dan<br>Tembakau</td><td>Oktober</td><td>2021</td><td>Bulan Oktober<br>Tahun 2021</td><td>2.54</td><td>154.579</td><td><div class="acts"><span class="red"><svg><use href="#b-trash"/></svg></span></div></td></tr>
              <tr><td>3</td><td>Data IHK Kelompok pengeluaran<br>Perumahan, Air, Listrik dan<br>Bahan Bakar Rumah Tangga</td><td>Oktober</td><td>2021</td><td>Bulan Oktober<br>Tahun 2021</td><td>0.327</td><td>100.768</td><td><div class="acts"><span class="red"><svg><use href="#b-trash"/></svg></span></div></td></tr>
              <tr><td>4</td><td>Data IHK Kelompok pengeluaran<br>Makanan, Minuman dan<br>Tembakau</td><td>Oktober</td><td>2021</td><td>Bulan Oktober<br>Tahun 2021</td><td>1.483</td><td>102.359</td><td><div class="acts"><span class="red"><svg><use href="#b-trash"/></svg></span></div></td></tr>
              <tr><td>5</td><td>Data IHK Kelompok pengeluaran<br>Perumahan, Air, Listrik dan<br>Bahan Bakar Rumah Tangga</td><td>Oktober</td><td>2021</td><td>Bulan Oktober<br>Tahun 2021</td><td>0.081</td><td>100.251</td><td><div class="acts"><span class="red"><svg><use href="#b-trash"/></svg></span></div></td></tr>
            </table>
            <hr>
          </div>
        </main>
      </div>
    </div>
    <div class="scroll"><i></i></div>
  </div>
  <div class="taskbar">
    <div class="start"><svg><use href="#win"/></svg></div>
    <div class="find"><svg><use href="#search"/></svg><span>Type here to search</span><svg class="art"><use href="#art"/></svg></div>
    <div class="tv"><svg><use href="#task"/></svg></div>
    <div class="app"><svg><use href="#edge"/></svg></div><div class="app run"><svg><use href="#folder"/></svg></div><div class="app"><svg><use href="#chrome"/></svg></div><div class="app run"><svg><use href="#whatsapp"/></svg><em class="round">9</em></div><div class="app run"><svg><use href="#vscode"/></svg></div><div class="app run now"><svg><use href="#chrome"/></svg><svg class="mini"><use href="#face"/></svg></div><div class="app run"><svg><use href="#ppt"/></svg></div><div class="app run"><svg><use href="#nitro"/></svg></div><div class="app run"><svg><use href="#word"/></svg></div><div class="app run"><svg><use href="#ps"/></svg><strong>Ps</strong></div><div class="app run"><svg><use href="#xampp"/></svg></div><div class="app run"><svg><use href="#telegram"/></svg><em>21</em></div><div class="app run"><svg><use href="#acrobat"/></svg></div>
    <div class="tray"><svg class="wx"><use href="#weather"/></svg><span class="temp">33°C</span><svg><use href="#t-up"/></svg><svg><use href="#t-cloud"/></svg><svg><use href="#t-meet"/></svg><svg><use href="#t-bat"/></svg><svg><use href="#t-wifi"/></svg><svg><use href="#t-vol"/></svg><span class="clock">13:27<br>15/08/2022</span><span class="note"><svg><use href="#t-note"/></svg><em>24</em></span></div>
  </div>
</section>
</body>
</html>
```
FILE: styles.css
```css
* { box-sizing: border-box; margin: 0; padding: 0; }
body { width: 1890px; height: 1417px; position: relative; overflow: hidden; background: #fff; font: 15.200px/24px "Open Sans", "Noto Sans", sans-serif; letter-spacing: -.08px; color: #43484e; }
svg { display: block; flex: none; width: 16px; height: 16px; }
.defs { position: absolute; width: 0; height: 0; }
i, em { font-style: normal; }

/* desktop windows, each laid out at 1366x768 and scaled down */
.win { position: absolute; width: 1366px; height: 768px; overflow: hidden; transform-origin: 0 0; background: #fff; white-space: nowrap; }
.win-login { left: 0; top: 0; transform: scale(.6547); }
.win-init { left: 961px; top: 230px; transform: scale(.6830); }
.win-calc { left: 43px; top: 606px; transform: scale(.672); }
.win-test { left: 952px; top: 890px; transform: scale(.6864); }

/* browser tabs */
.tabs { display: flex; height: 35px; padding-left: 9px; background: #dee1e6; }
.tab { position: relative; display: flex; align-items: center; width: 218px; height: 35px; padding: 0 8px 2px 11px; font-size: 11.600px; letter-spacing: -.22px; color: #4d5156; }
.tab span { flex: 1; overflow: hidden; margin: 0 6px 0 9px; -webkit-mask: linear-gradient(90deg, #000 88%, transparent); mask: linear-gradient(90deg, #000 88%, transparent); }
.tab .audio { width: 12px; height: 12px; margin-right: 5px; }
.tab + .tab::before { content: ""; position: absolute; left: 0; top: 8px; width: 1px; height: 20px; background: #85888c; }
.tab.on { padding-left: 9px; padding-right: 10px; background: #fff; border-radius: 9px 9px 0 0; }
.tab.on::before { display: none; }
.tab.on span { margin-left: 8px; color: #3c4043; }
.new { width: 14px; height: 14px; margin: 10px 0 0 13px; }
.ctl { display: flex; margin-left: auto; }
.ctl svg { width: 46px; height: 14px; margin-top: 8px; }

/* address bar */
.bar { display: flex; align-items: center; height: 36px; padding: 0 6px 1px; background: #fff; border-bottom: 1px solid #dadce0; }
.bar > svg, .url > svg { width: 32px; height: 15px; }
.bar > .me { height: 22px; }
.url { display: flex; flex: 1; align-items: center; height: 28px; margin: 0 8px 0 7px; background: #f1f3f4; border-radius: 14px; }
.url p { flex: 1; margin-left: 1px; font-size: 13.600px; letter-spacing: -.12px; color: #5f6368; }
.url b { font-weight: 400; color: #202124; }

/* viewport and scrollbar */
.view { display: flex; height: 657px; overflow: hidden; }
.doc, .login { flex: none; width: 1349px; }
.scroll { position: relative; width: 17px; height: 657px; background: #f1f1f1; }
.scroll::before, .scroll::after { content: ""; position: absolute; left: 5px; border: 4px solid transparent; }
.scroll::before { top: 3px; border-bottom-color: #777; }
.scroll::after { bottom: 3px; border-top-color: #444; }
.scroll i { display: block; width: 13px; margin: 0 2px; background: #c1c1c1; }
.win-login .scroll { padding-top: 17px; }
.win-login .scroll i { height: 593px; }
.win-init .scroll { padding-top: 66px; }
.win-init .scroll i { height: 491px; }
.win-calc .scroll { padding-top: 33px; }
.win-calc .scroll i { height: 48px; }
.win-test .scroll { padding-top: 110px; }
.win-test .scroll i { height: 380px; }

/* login page */
.login { position: relative; height: 657px; padding-top: 96px; background: #f3f4f7; font-family: Inter, sans-serif; font-size: 14px; letter-spacing: 0; color: #74788d; }
.house { position: absolute; left: 1292px; top: 15px; width: 32px; height: 27px; }
.login-card { width: 450px; height: 462px; margin-left: 448.500px; background: #fff; border-radius: 4px; box-shadow: 0 12px 30px rgba(18, 38, 63, .04); }
.hero { height: 173px; padding-top: 61px; text-align: center; background: #283b80; border-radius: 4px 4px 50% 50% / 4px 4px 86px 86px; }
.hero h5 { font-size: 20px; font-weight: 600; line-height: 24px; color: #fff; }
.hero p { margin-top: 5px; line-height: 24px; color: #949dc0; }
.badge { display: flex; align-items: center; justify-content: center; width: 74px; height: 74px; margin: 23px auto 0; background: #fff; border-radius: 50%; box-shadow: 0 8px 16px rgba(18, 38, 63, .03); }
.badge svg { width: 31px; height: 31px; }
.form { padding: 54px 27px 0 28px; }
.form label { display: block; height: 31px; font-weight: 500; line-height: 24px; }
.input { position: relative; height: 38px; margin-bottom: 14px; padding: 0 12px; line-height: 36px; color: #8a8fa8; border: 1px solid #dcdfe6; border-radius: 4px; }
.tip { position: absolute; left: 81px; top: 24px; height: 26px; padding: 0 7px; font: 12px/23px "Open Sans", sans-serif; letter-spacing: -.25px; color: #575757; background: #fff; border: 1px solid #555; z-index: 1; }
.submit { height: 38px; font-weight: 500; line-height: 38px; text-align: center; color: #fff; background: #3b5de7; border-radius: 4px; margin-top: 16px; }
.copy { margin-top: 45px; text-align: center; letter-spacing: -.03px; }
.copy span { color: #ff5c44; }

/* admin shell */
.win-calc .doc { margin-top: -180px; }
.win-test .doc { margin-top: -97px; }
.banner { height: 100px; background: #283b91; box-shadow: 0 2px 5px rgba(40, 50, 90, .3); }
.mesh { width: 1349px; height: 100px; }
.layout { position: relative; display: flex; align-items: stretch; margin-top: -100px; padding-left: 49px; }
.side { flex: none; width: 250px; margin-top: 39px; padding-top: 24px; background: #fff; border-radius: 7px 7px 0 0; color: #6f7a87; box-shadow: 0 80px 30px rgba(30, 40, 60, .02); }
.ring { display: flex; justify-content: center; width: 73px; height: 73px; margin: 0 auto; padding-top: 12px; border: 2px dashed #3b5de7; border-radius: 50%; }
.ring svg { width: 23px; height: 28px; filter: drop-shadow(0 7px 6px rgba(250, 100, 60, .45)); }
.side h4 { margin-top: 16px; font-size: 15.600px; font-weight: 600; letter-spacing: -.22px; text-align: center; color: #43484e; }
.side .role { margin-top: 2px; font-size: 13px; text-align: center; color: #565b62; }
.side h6 { height: 48px; margin-top: 29px; padding-left: 20px; font-size: 11px; font-weight: 600; letter-spacing: .2px; color: #6f7580; }
.side h6.second { height: 36px; margin-top: 10px; }
.side a { display: flex; align-items: center; height: 45.800px; padding-left: 24px; font-size: 13.600px; letter-spacing: 0; color: #74808c; }
.side h6 + a { margin-top: -15.500px; }
.side h6.second + a { margin-top: -5px; }
.side a svg { width: 19px; height: 19px; margin-right: 13px; color: #64707d; }
.side a.on, .side a.on svg { color: #4a63ea; }
.main { width: 954px; margin-left: 24px; }
.head { display: flex; justify-content: space-between; align-items: flex-start; height: 127px; padding-top: 51px; }
.head h2 { margin-top: 5px; font-size: 14.300px; font-weight: 700; letter-spacing: -.1px; color: #fff; }
.crumb { display: flex; align-items: center; height: 26px; padding: 0 17px; background: #fff; border-radius: 4px; color: #212529; }
.crumb a { color: #2f8bf5; }
.crumb svg { width: 7px; height: 11px; margin: 0 4px; }
.card { height: 900px; padding: 20px; background: #fff; border: 1px solid #e6e8ec; border-radius: 4px; }
.btn-add { display: flex; align-items: center; width: 139px; height: 38px; margin-bottom: 15px; padding-left: 13px; color: #fff; background: #007bff; border-radius: 4px; }
.btn-add svg { margin-right: 4px; }
.btn-add.right { width: 94px; margin-left: auto; margin-bottom: 17px; }

/* data tables */
.tools { display: flex; align-items: center; height: 31px; margin-bottom: 14px; }
.select { display: flex; align-items: center; justify-content: space-between; width: 61px; height: 31px; margin: 0 4px 0 5px; padding: 0 11px 0 8px; font-size: 14px; color: #73797f; border: 1px solid #d5dade; border-radius: 3px; }
.select svg { width: 8px; height: 10px; }
.push { margin-left: auto; }
.field { width: 177px; height: 31px; margin-left: 7px; border: 1px solid #d5dade; border-radius: 3px; }
.win-test .tools { margin-top: 15px; }
table { width: 100%; table-layout: fixed; border-collapse: separate; border-spacing: 0; }
th, td { padding: 12px; vertical-align: top; text-align: left; border-top: 1px solid #e3e7ea; }
th { position: relative; padding-right: 30px; white-space: normal; vertical-align: bottom; font-weight: 600; letter-spacing: -.15px; color: #33383d; border-bottom: 2px solid #dee2e6; }
th::before, th::after { position: absolute; bottom: 15px; font: 400 14px/24px "DejaVu Sans", sans-serif; color: #c9cccf; }
th::before { content: "\2191"; right: 13px; }
th::after { content: "\2193"; right: 5px; }
th.asc::before { color: #555a60; }
tr:nth-child(2) td { border-top: 0; }
.init th:nth-child(1) { width: 68px; }
.init th:nth-child(2) { width: 78px; }
.init th:nth-child(3) { width: 76px; }
.init th:nth-child(4), .init th:nth-child(5) { width: 93px; }
.init th:nth-child(6) { width: 114px; }
.init th:nth-child(7) { width: 92px; }
.init th:nth-child(8) { width: 103px; }
.init th:nth-child(9) { width: 107px; }
.test th:nth-child(1) { width: 68px; }
.test th:nth-child(2) { width: 256px; }
.test th:nth-child(3) { width: 83px; }
.test th:nth-child(4) { width: 87px; }
.test th:nth-child(5) { width: 149px; }
.test th:nth-child(6) { width: 84px; }
.test th:nth-child(7) { width: 99px; }
hr { border: 0; border-top: 1px solid #e3e7ea; }
.acts { display: flex; flex-direction: column; align-items: center; margin-left: 2px; }
.acts span { display: flex; align-items: center; justify-content: center; width: 40px; height: 38.200px; border-radius: 4px; }
.acts svg { width: 15px; height: 15px; }
.init .acts { padding-top: 1px; }
.blue { background: #007bff; }
.amber { background: #ffc107; }
.red { background: #dc3545; }
.test .acts { margin-bottom: -10px; }
.foot { display: flex; justify-content: space-between; margin-top: 7px; }
.foot > span { margin-top: 12px; }
.pager { display: flex; height: 38px; border: 1px solid #dee2e6; border-radius: 4px; color: #6c757d; line-height: 36px; }
.pager span { padding: 0 12px; }
.pager .on { margin: -1px 0; line-height: 38px; color: #fff; background: #007bff; }
.hscroll { height: 17px; margin-top: 4px; padding: 0 18px; background: #f1f1f1; }
.hscroll i { display: block; height: 17px; background: #bdbdbd; }

/* calculation page */
.pills { display: flex; flex-wrap: wrap; color: #007bff; }
.pills a { height: 42px; padding: 0 17px; line-height: 41px; color: #2088fa; }
.pills a.on { height: 43px; padding: 0 16px; color: #495057; border: 1px solid #dee2e6; border-bottom: 0; border-radius: 4px 4px 0 0; }
.panel { height: 700px; border: 1px solid #dcdfe2; }
.panel-head { height: 63px; padding-left: 33px; line-height: 63px; color: #2088fa; background: #f7f7f7; border-bottom: 1px solid #dfe1e3; }
.panel-body { padding: 20px; }
h3 { height: 36px; font-size: 23.200px; font-weight: 500; line-height: 28px; letter-spacing: -.2px; color: #3b4046; }
.grid { border-right: 1px solid #e3e7ea; border-bottom: 1px solid #e3e7ea; }
.grid th, .grid td { height: 49.200px; border-left: 1px solid #e3e7ea; padding: 12px 0 12px 11px; }
.grid th { height: 51px; }
.grid td { padding-top: 13px; padding-bottom: 11px; }
.grid + .foot { margin-top: 8px; }

/* taskbar */
.taskbar { display: flex; height: 40px; color: #fff; background: linear-gradient(90deg, #1f1c1a, #2b2622 35%, #2e2820 70%, #29271e); }
.start { display: flex; align-items: center; justify-content: center; width: 48px; background: #1c1a19; }
.find { display: flex; align-items: center; width: 343px; padding-left: 12px; color: #444; background: #f2f2f2; font-size: 14.500px; border-top: 1px solid #ccc; }
.find svg { margin-right: 12px; }
.find .art { width: 78px; height: 39px; margin: 0 0 0 auto; }
.tv { display: flex; align-items: center; justify-content: center; width: 51px; }
.app { position: relative; display: flex; align-items: center; justify-content: center; width: 43px; }
.app svg { width: 24px; height: 24px; }
.app.run::after { content: ""; position: absolute; left: 5px; right: 5px; bottom: 0; height: 3px; background: #76b9ed; }
.app.now { background: #55514d; }
.app.now::after { left: 0; right: 0; }
.app .mini { position: absolute; left: 20px; top: 18px; width: 14px; height: 14px; }
.app strong { position: absolute; font-size: 10.500px; line-height: 24px; color: #31a8ff; }
.app em { position: absolute; left: 22px; top: 20px; min-width: 15px; padding: 0 2px; font-size: 10px; line-height: 13px; text-align: center; background: #e23b3b; border-radius: 3px; }
.app em.round { left: 20px; top: 18px; width: 16px; font-size: 12px; line-height: 16px; background: #e5141c; border-radius: 50%; }
.tray { display: flex; align-items: center; margin-left: auto; border-right: 1px solid #6b675f; margin-right: 4px; }
.tray svg { width: 24px; height: 16px; }
.tray .wx { width: 26px; height: 23px; }
.temp { width: 42px; margin-left: 7px; font-size: 14px; letter-spacing: -.5px; }
.clock { width: 70px; font-size: 11.500px; line-height: 18px; letter-spacing: -.4px; text-align: center; }
.note { position: relative; width: 48px; height: 40px; }
.tray .note svg { width: 19px; height: 19px; margin: 9px 0 0 12px; }
.note em { position: absolute; left: 20px; top: 14px; width: 19px; height: 19px; font-size: 13px; font-weight: 600; line-height: 19px; letter-spacing: -.6px; text-align: center; background: #3a3630; border-radius: 50%; }
```
